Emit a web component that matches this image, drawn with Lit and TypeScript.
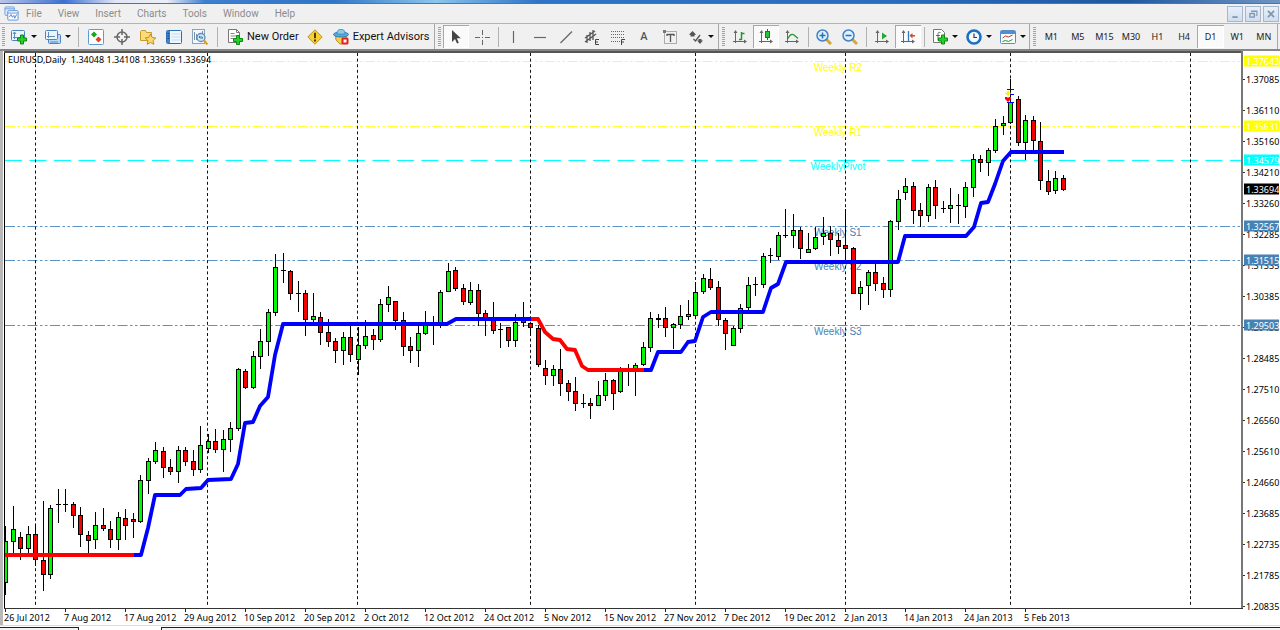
import { LitElement, html, svg, css, nothing, TemplateResult } from "lit";
import { customElement, property, state } from "lit/decorators.js";
import { classMap } from "lit/directives/class-map.js";

/* ---------- chart space: one unit is one pixel of the default window ---------- */
const LEFT = 4;
const TOP = 51;
const WIDTH = 1239;
const HEIGHT = 558;
const FIRST_BAR = 5.5;
const BAR_STEP = 7.5;

type Bar = [kind: "u" | "d" | "x", top: number, bottom: number, high: number, low: number];

// u: rising bar, d: falling bar, x: open equals close
const BARS: Bar[] = [
  ["u",541,583,526,595],["u",529,542,506,554],["d",537,549,532,560],["u",534,549,526,553],["d",534,560,524,566],
  ["d",560,575,501,591],["u",508,575,505,579],["x",504,505,489,523],["x",504,504,489,512],["d",504,516,502,528],
  ["d",515,535,507,547],["d",535,541,531,554],["u",525,540,512,549],["d",525,529,508,531],["d",529,540,521,548],
  ["u",517,540,512,550],["d",518,526,509,540],["d",519,522,513,538],["u",480,522,475,523],["u",461,481,458,494],
  ["u",450,462,442,464],["d",451,468,447,478],["d",467,472,459,475],["u",450,472,446,483],["d",450,462,447,466],
  ["d",461,470,450,476],["u",445,470,426,473],["u",441,449,434,453],["d",441,450,429,453],["u",439,450,430,472],
  ["u",428,440,422,452],["u",369,429,368,431],["d",371,388,369,389],["u",356,388,351,389],["u",341,357,329,369],
  ["u",312,342,309,356],["u",267,313,254,316],["x",270,271,253,283],["d",271,294,270,300],["x",293,293,281,312],
  ["d",293,320,290,336],["u",316,320,293,323],["d",317,333,312,345],["d",332,342,319,347],["d",341,351,338,363],
  ["u",337,351,332,365],["d",337,355,322,362],["u",345,360,327,375],["u",336,346,320,349],["d",335,340,329,350],
  ["u",304,340,299,342],["u",297,305,286,312],["d",301,321,301,330],["d",320,347,312,356],["d",346,351,337,363],
  ["u",333,351,326,367],["u",325,334,311,335],["x",324,324,316,345],["u",292,324,290,328],["u",271,292,263,292],
  ["d",270,289,267,291],["d",288,302,284,305],["u",290,303,282,305],["d",290,314,284,326],["d",313,318,310,336],
  ["d",319,331,302,334],["x",329,330,323,348],["d",327,341,327,347],["u",322,341,314,347],["d",319,323,302,327],
  ["d",323,328,323,335],["d",328,365,325,367],["d",368,376,360,385],["u",369,376,365,386],["d",369,384,349,396],
  ["d",383,392,380,401],["d",391,404,377,411],["x",403,404,394,408],["d",403,406,398,419],["u",395,406,381,406],
  ["u",380,396,373,401],["d",380,394,379,410],["u",371,392,367,393],["x",370,370,364,386],["u",365,370,363,396],
  ["u",347,365,342,366],["u",318,348,312,352],["u",318,320,314,328],["d",318,328,307,337],["u",324,328,323,349],
  ["u",316,325,305,329],["u",314,317,300,320],["u",292,316,282,318],["u",278,292,274,294],["d",279,288,268,290],
  ["d",287,320,281,326],["d",320,334,318,350],["u",328,346,326,346],["u",308,329,304,333],["u",285,308,277,311],
  ["x",284,285,277,296],["u",256,285,253,288],["x",255,256,248,263],["u",235,257,232,260],["x",235,235,209,238],
  ["u",230,236,214,248],["d",230,249,227,259],["u",249,253,233,253],["u",237,249,227,250],["u",233,237,217,245],
  ["d",233,240,226,256],["d",240,247,233,254],["d",245,249,209,260],["d",248,294,247,294],["u",287,294,281,310],
  ["u",272,286,270,305],["d",272,284,263,291],["d",283,290,277,298],["u",221,290,220,297],["u",199,222,190,230],
  ["u",186,193,178,200],["d",186,211,182,224],["d",210,216,203,227],["u",187,216,184,222],["d",187,206,180,219],
  ["x",208,208,201,213],["u",205,209,188,223],["x",205,206,194,224],["u",187,207,182,218],["u",159,188,154,197],
  ["d",159,163,155,172],["u",150,163,148,176],["u",126,151,119,153],["u",123,126,116,135],["u",102,123,79,124],
  ["d",99,143,96,146],["u",120,143,115,160],["d",120,141,116,151],["d",141,181,122,190],["d",181,192,170,195],
  ["u",178,191,171,194],["d",178,190,175,191],
];

const TREND = [
  { color: "#ff0000", points: "5,555 134,555" },
  { color: "#0000ff", points: "134,555 141,555 148,528 155,495 180,495 186,489 201,488 208,480 231,479 238,464 245,423 253,422 260,406 268,397 275,355 283,324 447,324 456,319 531,319" },
  { color: "#ff0000", points: "531,319 538,319 545,332 553,339 560,340 567,349 575,350 582,366 588,370 644,370" },
  { color: "#0000ff", points: "644,370 651,370 658,352 681,352 688,342 695,341 703,317 711,312 763,312 771,288 778,284 786,262 898,262 905,236 966,236 974,227 981,203 988,202 995,184 1003,161 1011,152 1064,152" },
];

const SEPARATORS = [35, 207, 357, 530, 695, 845, 1010, 1190];

interface Level { name: string; at: number; price: string; color: string; line: string; dash: string }
const DOTTED = "10 2.5 2.5 2.5 2.5 2.5";
const LEVELS: Level[] = [
  { name: "Weekly R2", at: 61, price: "1.37643", color: "#ffff00", line: "#ffff33", dash: DOTTED },
  { name: "Weekly R1", at: 126, price: "1.35631", color: "#ffff00", line: "#ffff33", dash: DOTTED },
  { name: "WeeklyPivot", at: 160, price: "1.34579", color: "#00ffff", line: "#00ffff", dash: "17 7.5" },
  { name: "", at: 189, price: "1.33694", color: "#000000", line: "", dash: "" },
  { name: "Weekly S1", at: 226, price: "1.32567", color: "#4682b4", line: "#5b94c4", dash: DOTTED },
  { name: "Weekly S2", at: 260, price: "1.31515", color: "#4682b4", line: "#5b94c4", dash: DOTTED },
  { name: "Weekly S3", at: 325, price: "1.29503", color: "#4682b4", line: "#5b94c4", dash: DOTTED },
];

const PRICES = [
  "1.37085","1.36110","1.35160","1.34210","1.33260","1.32285","1.31335","1.30385","1.29435",
  "1.28485","1.27510","1.26560","1.25610","1.24660","1.23685","1.22735","1.21785","1.20835",
];

const DATES = [
  "26 Jul 2012","7 Aug 2012","17 Aug 2012","29 Aug 2012","10 Sep 2012","20 Sep 2012","2 Oct 2012","12 Oct 2012","24 Oct 2012",
  "5 Nov 2012","15 Nov 2012","27 Nov 2012","7 Dec 2012","19 Dec 2012","2 Jan 2013","14 Jan 2013","24 Jan 2013","5 Feb 2013",
];

const percentY = (y: number) => `${((y - TOP) / HEIGHT) * 100}%`;

/* ---------- icons, all on a 16 by 16 grid ---------- */
const plus = (x: number, y: number) => svg`
  <path d="M${x + 3} ${y}h3v3h3v3h-3v3h-3v-3h-3v-3h3z" fill="#27cf2d" stroke="#0b8a12" stroke-width="1"/>`;
const axes = svg`
  <path d="M3.500 2v12M1 12.500h13" stroke="#666" fill="none"/>
  <path d="M1.500 4l2-3 2 3zM12 10.500l3 2-3 2z" fill="#666"/>`;

const ICONS: Record<string, TemplateResult<2>> = {
  app: svg`<rect x="1" y="1" width="10" height="9" rx="1" fill="#dbeaff" stroke="#6d9fe0"/>
    <path d="M1 3h10" stroke="#6d9fe0"/>
    <rect x="4" y="5" width="11" height="10" rx="1" fill="#fff" stroke="#5a90d8"/>
    <path d="M4 7.500h11" stroke="#5a90d8"/><path d="M5.500 12l2-3 1.500 3 1.500-2 1 3 2-4" fill="none" stroke="#4b86d6"/>`,
  newChart: svg`<rect x=".5" y="1.500" width="13" height="10" rx="1" fill="#eaf4ff" stroke="#4c84bd"/>
    <path d="M3.500 3v7M2 8.500h9M2 5l1.500-2L5 5" fill="none" stroke="#5d8bb8"/>${plus(6.5, 6)}`,
  profiles: svg`<rect x="3.500" y="5.500" width="12" height="9" rx="1" fill="#bcd9f7" stroke="#4c84bd"/>
    <rect x=".5" y="1.500" width="12" height="9" rx="1" fill="#eaf4ff" stroke="#4c84bd"/>
    <path d="M3.500 3v6M2 7.500h8M5 13h8" fill="none" stroke="#5d8bb8"/>`,
  market: svg`<rect x=".5" y=".5" width="15" height="15" rx="1" fill="#fdfeff" stroke="#5b9bd8"/>
    <path d="M6 2.500l3 3-3 3-3-3z" fill="#19a51c"/><path d="M10.500 7.500l3 3-3 3-3-3z" fill="#e04324"/>`,
  target: svg`<circle cx="8" cy="8" r="5" fill="none" stroke="#666" stroke-width="1.500"/>
    <path d="M8 0v6M8 10v6M0 8h6M10 8h6" stroke="#666" stroke-width="1.500"/>`,
  favorites: svg`<path d="M.5 11.500v-9l1-1h4l1 2h5v8z" fill="#f8dc78" stroke="#c89a2c"/>
    <path d="M10.500 5l1.700 3.400 3.600.5-2.600 2.600.6 3.800-3.300-1.800-3.300 1.800.6-3.800L5.200 8.900l3.600-.5z" fill="#ffd964" stroke="#b9812a" stroke-width=".9"/>`,
  navigator: svg`<rect x=".5" y="1.500" width="15" height="13" rx="1" fill="#eef7ff" stroke="#2e6fb2"/>
    <rect x="1" y="2" width="3" height="12" fill="#3d85cc"/><path d="M5.500 5h9M5.500 8h9M5.500 11h9" stroke="#c2dcf2"/>
    <path d="M1.500 4.500h2M1.500 7h2M1.500 9.500h2" stroke="#12457c"/>`,
  tester: svg`<rect x=".5" y=".5" width="12" height="14" fill="#f3f7fb" stroke="#8aa3bb"/>
    <path d="M2.500 3v8M4.500 5v6M10.500 2v5" stroke="#7893ac"/>
    <circle cx="9" cy="8.500" r="4" fill="#cfe7fb" stroke="#5e8eb8" stroke-width="1.300"/>
    <path d="M7.500 9v-2M9 10V7M10.500 9.500V8" stroke="#4d7196"/><path d="M12 11.500l3.500 4" stroke="#d9a32c" stroke-width="2.200"/>`,
  order: svg`<path d="M1.500.5h8l3 3v10h-11z" fill="#fff" stroke="#777"/><path d="M9.500.5v3h3" fill="none" stroke="#777"/>
    <path d="M3.500 4.500h4M3.500 7h6M3.500 9.500h3" stroke="#888"/>${plus(6.5, 6.5)}`,
  warning: svg`<path d="M8 .8L15.200 8 8 15.200.8 8z" fill="#f8d030" stroke="#c08f1c" stroke-linejoin="round"/>
    <path d="M8 3.800v5.400M8 10.600v2" stroke="#3a2c08" stroke-width="1.800"/>`,
  expert: svg`<path d="M2.500 6h11l-1 6-3.500 3h-2l-4-4z" fill="#f6cf4e" stroke="#bd8b27"/>
    <ellipse cx="8" cy="5.500" rx="7.500" ry="2.500" fill="#5aa9d8" stroke="#2f7fb5"/>
    <path d="M4 4.500C4 1 6 .5 8 .5s4 .5 4 4c-2 1-6 1-8 0z" fill="#8ccbec" stroke="#3f8fc2"/>
    <rect x="8.500" y="8.500" width="7" height="7" rx="1.500" fill="#e2231a"/><rect x="10.500" y="10.500" width="3" height="3" fill="#fff"/>`,
  cursor: svg`<path d="M4 1v12l3-3 2 4.500 1.800-.8-2-4.400h4z" fill="#444"/>`,
  cross: svg`<path d="M8.500 1v5M8.500 11v5M1 8.500h5M11 8.500h5" stroke="#666"/><path d="M8 8.500h1" stroke="#666"/>`,
  vline: svg`<path d="M7.500 2v12" stroke="#666" stroke-width="1.200"/>`,
  hline: svg`<path d="M2 8.500h12" stroke="#666" stroke-width="1.200"/>`,
  trend: svg`<path d="M2.500 14L14 2.500" stroke="#666" stroke-width="1.200"/>`,
  channel: svg`<path d="M1 9L11 2M1 13l11-8M3 14V6M6 12V3M9 11V1" stroke="#555" stroke-width="1.300"/>
    <path d="M15 10.500h-3.500v5H15M11.500 13H14" fill="none" stroke="#444"/>`,
  fibo: svg`<path d="M1 2.500h14M1 5.500h14M1 8.500h14M1 12.500h9" stroke="#666" stroke-dasharray="1 1"/>
    <path d="M15 10.500h-3.500V16M11.500 13H14" fill="none" stroke="#444"/>`,
  label: svg`<rect x="2.500" y="2.500" width="12" height="12" fill="none" stroke="#666" stroke-dasharray="1 1"/>
    <path d="M1 1h3v3H1z" fill="#777"/><path d="M5 5.500h7M8.500 5.500V13M5 5v2M12 5v2" stroke="#555" stroke-width="1.300" fill="none"/>`,
  arrows: svg`<path d="M1 5.500L4.500 2 8 5.500 6.500 6v1.500h-4V6z" fill="#555"/><path d="M5.500 10l2 2 4.500-6" fill="none" stroke="#555" stroke-width="1.300"/>
    <path d="M9 11.500h1.500V10h3v1.500H15L12 15z" fill="#555"/>`,
  bars: svg`${axes}<path d="M9.500 3v8M9.500 4.500h3M7 10.500h2.500" stroke="#229a2b" stroke-width="1.500" fill="none"/>`,
  candles: svg`${axes}<path d="M9.500 0v11" stroke="#117d1b"/><rect x="7.500" y="2.500" width="4" height="6" fill="#27c436" stroke="#117d1b"/>`,
  line: svg`${axes}<path d="M4 9.500c2-4 4-5 6-3.500l4 3.500" stroke="#229a2b" stroke-width="1.300" fill="none"/>`,
  zoomIn: svg`<path d="M10 10l5 5" stroke="#d8a53a" stroke-width="3"/><circle cx="6.500" cy="6.500" r="5.500" fill="#dcf0ff" stroke="#3e83c4" stroke-width="1.500"/>
    <path d="M3.500 6.500h6M6.500 3.500v6" stroke="#2c6fae" stroke-width="1.500"/>`,
  zoomOut: svg`<path d="M10 10l5 5" stroke="#d8a53a" stroke-width="3"/><circle cx="6.500" cy="6.500" r="5.500" fill="#dcf0ff" stroke="#3e83c4" stroke-width="1.500"/>
    <path d="M3.500 6.500h6" stroke="#2c6fae" stroke-width="1.500"/>`,
  scroll: svg`${axes}<path d="M8 3.500l5 3.500-5 3.500z" fill="#27a632"/>`,
  shift: svg`${axes}<path d="M8.500 2v10" stroke="#3a78b5" stroke-width="1.300"/><path d="M9.500 6.500l3-2.500v2h2.500v1.500h-2.500v2z" fill="#cf4a20"/>`,
  indicators: svg`<path d="M1.500.5h8l3 3v10h-11z" fill="#fff" stroke="#777"/><path d="M8.500 3.500c-2-.5-2.500 0-2.500 2v6M4 6.500h4" fill="none" stroke="#666"/>${plus(6.5, 6)}`,
  clock: svg`<circle cx="8" cy="8" r="6.500" fill="#f2f9ff" stroke="#1d6fc0" stroke-width="2.600"/><path d="M8 4.500V8.500h3" fill="none" stroke="#335" stroke-width="1.200"/>`,
  template: svg`<rect x=".5" y="1.500" width="15" height="13" rx="1" fill="#f8fcff" stroke="#5b8fc4"/><path d="M1 3.500h14" stroke="#4a90d9" stroke-width="3"/>
    <path d="M2.500 9l3-2 3 1 4-2" fill="none" stroke="#c0392b"/><path d="M2.500 12.500l3-1 3 1 4-2" fill="none" stroke="#229a2b"/>`,
  minimize: svg`<path d="M5 11.500h6" stroke="#8196ad" stroke-width="2"/>`,
  restore: svg`<path d="M6.500 6V4.500h6v5H11M6 5h7" fill="none" stroke="#8196ad" stroke-width="1.200"/><rect x="4.500" y="7.500" width="5" height="4" fill="none" stroke="#8196ad" stroke-width="1.500"/>`,
  close: svg`<path d="M4.500 4.500l7 7M11.500 4.500l-7 7" stroke="#8196ad" stroke-width="2"/>`,
};

const icon = (name: string) =>
  html`<svg class="icon" viewBox="0 0 16 16" aria-hidden="true">${ICONS[name]}</svg>`;

/* ---------- menu bar ---------- */
@customElement("terminal-menu")
class TerminalMenu extends LitElement {
  static styles = css`
    :host { display: block; }
    .strip {
      height: 4px;
      background: linear-gradient(90deg, #b9c6ea 0, #3c6fd0 5%, #dfe6f5 9%, #eceff8 13%, #3f7fd0 16%, #2f74c6 26%, #8bc6ee 34%, #2f74c6 42%, #2a6cbd 70%, #1f58a0 88%, #6f95c4 100%);
      border-bottom: 1px solid #5d7287;
      box-sizing: border-box;
    }
    .bar { display: flex; align-items: center; height: 19px; padding: 0 1px 0 4px; background: #f0f0f0; }
    .icon { width: 15px; height: 15px; display: block; }
    .items { display: flex; gap: 16px; margin-left: 7px; flex: 1; }
    .item { border: 0; padding: 0; background: none; font: 10px/16px Roboto, "Liberation Sans", sans-serif; color: #8c8c8c; }
    .windows { display: flex; gap: 2px; }
    .window {
      width: 16px; height: 16px; padding: 0; display: grid; place-items: center;
      border: 1px solid #a3b8d0; background: linear-gradient(#e8f0f9, #cfdeee);
    }
    .window .icon { width: 14px; height: 14px; }
  `;
  render() {
    return html`
      <div class="strip"></div>
      <nav class="bar">
        ${icon("app")}
        <div class="items">
          ${["File", "View", "Insert", "Charts", "Tools", "Window", "Help"].map((t) => html`<button class="item">${t}</button>`)}
        </div>
        <div class="windows">
          ${["minimize", "restore", "close"].map((n) => html`<button class="window" aria-label=${n}>${icon(n)}</button>`)}
        </div>
      </nav>`;
  }
}

/* ---------- tool bar ---------- */
@customElement("terminal-toolbar")
class TerminalToolbar extends LitElement {
  @state() private frame = "D1";

  static styles = css`
    :host {
      display: flex; height: 25px; background: #f0f0f0; color: #111;
      border-top: 1px solid #b4b4b4; border-bottom: 2px solid #868686;
      font: 11px/16px Roboto, "Liberation Sans", sans-serif;
    }
    .group { display: flex; align-items: center; box-sizing: border-box; border-right: 1px solid #a8a8a8; }
    .main { flex: 0 0 435px; }
    .lines { padding-right: 1px; }
    .frames { flex: 1; margin-right: 2px; }
    .grip { width: 3px; height: 19px; margin: 0 1px 0 2px; background: repeating-linear-gradient(#a2a2a2 0 1px, #f0f0f0 1px 2px); flex: none; }
    .wide { margin: 0 2px 0 3px; }
    .sep { width: 1px; height: 20px; margin: 0 2px 0 3px; background: #b2b2b2; flex: none; }
    .main .sep { margin: 0 4px; }
    .tool {
      width: 26px; height: 23px; padding: 0; border: 0; background: none; color: inherit; font: inherit;
      display: flex; align-items: center; justify-content: center; flex: none;
    }
    .icon { width: 16px; height: 16px; flex: none; }
    .drop { width: 34px; justify-content: flex-start; padding-left: 5px; gap: 4px; }
    .caret { width: 0; border: 3px solid transparent; border-top-color: #111; border-bottom: 0; }
    .text { width: auto; gap: 4px; padding: 0 3px 0 5px; white-space: nowrap; }
    .pressed { background: #fafafa; box-shadow: inset 1px 1px #a8a8a8, inset -1px -1px #fff; }
    .letter { color: #555; font-weight: 500; }
    .frame { flex: 1; width: auto; font: 9px/12px "Noto Sans", sans-serif; color: #222; }
  `;

  private tool(name: string, pressed = false) {
    return html`<button class=${classMap({ tool: true, pressed })} aria-label=${name}>${icon(name)}</button>`;
  }
  private drop(name: string) {
    return html`<button class="tool drop" aria-label=${name}>${icon(name)}<span class="caret"></span></button>`;
  }
  render() {
    const sep = html`<span class="sep"></span>`;
    return html`
      <div class="group main">
        <span class="grip"></span>
        ${this.drop("newChart")}${this.drop("profiles")}${sep}
        ${["market", "target", "favorites", "navigator", "tester"].map((n) => this.tool(n))}${sep}
        <button class="tool text">${icon("order")}New Order</button>
        ${this.tool("warning")}
        <button class="tool text">${icon("expert")}Expert Advisors</button>
      </div>
      <div class="group lines">
        <span class="grip wide"></span>
        ${this.tool("cursor", true)}${this.tool("cross")}${sep}
        ${["vline", "hline", "trend", "channel", "fibo"].map((n) => this.tool(n))}
        <button class="tool letter">A</button>
        ${this.tool("label")}${this.drop("arrows")}
      </div>
      <div class="group">
        <span class="grip wide"></span>
        ${this.tool("bars")}${this.tool("candles", true)}${this.tool("line")}${sep}
        ${this.tool("zoomIn")}${this.tool("zoomOut")}${sep}
        ${this.tool("scroll")}${this.tool("shift", true)}${sep}
        ${["indicators", "clock", "template"].map((n) => this.drop(n))}
      </div>
      <div class="group frames">
        <span class="grip wide"></span>
        ${["M1", "M5", "M15", "M30", "H1", "H4", "D1", "W1", "MN"].map(
          (f) => html`<button class=${classMap({ tool: true, frame: true, pressed: f === this.frame })}
            @click=${() => (this.frame = f)}>${f}</button>`
        )}
      </div>`;
  }
}

/* ---------- chart ---------- */
@customElement("price-chart")
class PriceChart extends LitElement {
  @property({ attribute: false }) bars: Bar[] = [];

  static styles = css`
    :host {
      display: grid; grid-template: minmax(0, 1fr) 16px / minmax(0, 1fr) 37px;
      padding: 0 0 0 4px; box-sizing: border-box; background: #fff; color: #000;
      box-shadow: inset 3px 0 #b8b8b8;
      font: 9px/11px "Noto Sans", sans-serif; overflow: hidden;
    }
    .layer { grid-area: 1 / 1; position: relative; min-width: 0; min-height: 0; }
    .plot { grid-area: 1 / 1; display: block; width: 100%; height: 100%; position: relative; }
    .title { grid-area: 1 / 1; align-self: start; position: relative; margin: 0; padding: 3px 4px; font: inherit; white-space: pre; }
    .name {
      position: absolute; left: 67.300%; transform: translateX(-50%); white-space: nowrap;
      font: 10px/12px "Liberation Sans", Arial, sans-serif;
    }
    .scale {
      grid-area: 1 / 2 / 3 / 3; display: flex; flex-direction: column; justify-content: space-between;
      list-style: none; margin: 0; padding: 23px 0 13px;
    }
    .price { display: flex; align-items: center; gap: 1px; }
    .price::before { content: ""; width: 2px; height: 1px; background: #333; }
    .badges { grid-area: 1 / 2; position: relative; }
    .badge { position: absolute; left: 1px; right: 1px; height: 11px; transform: translateY(-50%); padding-left: 2px; color: #fff; }
    .dates { grid-area: 2 / 1; display: grid; grid-template-columns: repeat(18, minmax(0, 60fr)) minmax(0, 159fr); }
    .date { white-space: nowrap; display: flex; flex-direction: column; }
    .date::before { content: ""; width: 1px; height: 3px; margin-left: 1px; background: #222; }
  `;

  private drawBar([kind, top, bottom, high, low]: Bar, i: number) {
    const x = FIRST_BAR + i * BAR_STEP;
    const edge = Math.floor(x) - 2;
    return svg`
      <path d="M${Math.floor(x) + 0.5} ${high}V${low}" stroke="#000"/>
      ${kind === "x"
        ? svg`<rect x=${edge} y=${top} width="5" height=${Math.max(1, bottom - top)} fill="#000"/>`
        : svg`<rect x=${edge + 0.5} y=${top + 0.5} width="4" height=${Math.max(1, bottom - top - 1)}
            fill=${kind === "u" ? "#00f800" : "#f80000"} stroke="#000"/>`}`;
  }

  render() {
    return html`
      <div class="layer">
        ${LEVELS.filter((l) => l.name).map(
          (l) => html`<span class="name" style="top:${percentY(l.at + 1)};color:${l.color}">${l.name}</span>`
        )}
      </div>
      <svg class="plot" viewBox="${LEFT} ${TOP} ${WIDTH} ${HEIGHT}" preserveAspectRatio="none" role="img" aria-label="EURUSD daily candles">
        ${LEVELS.map((l) => l.line
          ? svg`<path d="M5 ${l.at + 0.5}H1241" stroke=${l.line} stroke-dasharray=${l.dash}/>`
          : nothing)}
        ${SEPARATORS.map((x) => svg`<path d="M${x + 0.5} 53V607" stroke="#111" stroke-dasharray="3 2.6"/>`)}
        ${this.bars.map((b, i) => this.drawBar(b, i))}
        ${TREND.map((t) => svg`<polyline points=${t.points} fill="none" stroke=${t.color} stroke-width="3.800" stroke-linejoin="round"/>`)}
        <path d="M1007 89.500h7M1010 94.500h4M1007 102.500h7" stroke="#0000ff"/>
        <path d="M1008 90l1.500 2.500 2.500.5-2.500 1L1008 97l-1-2.500-2.500-1 2.500-1z" fill="#ffee00"/>
        <path d="M1005 97h2l1 1 1-1h2v2l-3 3-3-3z" fill="#ff0000"/>
        <path d="M4.500 609V51" stroke="#000"/>
        <path d="M4 52H1243" stroke="#555" stroke-width="2"/>
        <path d="M1242 51V609" stroke="#777" stroke-width="2"/>
        <path d="M4 608.500H1243" stroke="#333"/>
      </svg>
      <h1 class="title">EURUSD,Daily  1.34048 1.34108 1.33659 1.33694</h1>
      <ol class="scale">${PRICES.map((p) => html`<li class="price">${p}</li>`)}</ol>
      <div class="badges">
        ${LEVELS.map((l) => html`<span class="badge" style="top:${percentY(l.at)};background:${l.color}">${l.price}</span>`)}
      </div>
      <div class="dates">${DATES.map((d) => html`<span class="date">${d}</span>`)}</div>`;
  }
}

/* ---------- page ---------- */
@customElement("app-root")
class AppRoot extends LitElement {
  static styles = css`
    :host { display: flex; flex-direction: column; height: 100vh; overflow: hidden; background: #fff; }
    .chart { flex: 1; min-height: 0; }
    .tabs { display: grid; grid-template-columns: 79px 82px 1fr; height: 5px; flex: none; border-top: 1px solid #dcdcdc; box-sizing: border-box; }
    .tab { margin-top: 1px; border-top: 1px solid #222; background: #f4f4f4; }
    .first { border-right: 1px solid #222; }
    .last { grid-column: 3; border-left: 1px solid #222; }
  `;
  render() {
    return html`
      <terminal-menu></terminal-menu>
      <terminal-toolbar></terminal-toolbar>
      <price-chart class="chart" .bars=${BARS}></price-chart>
      <div class="tabs"><div class="tab first"></div><div class="tab last"></div></div>`;
  }
}
